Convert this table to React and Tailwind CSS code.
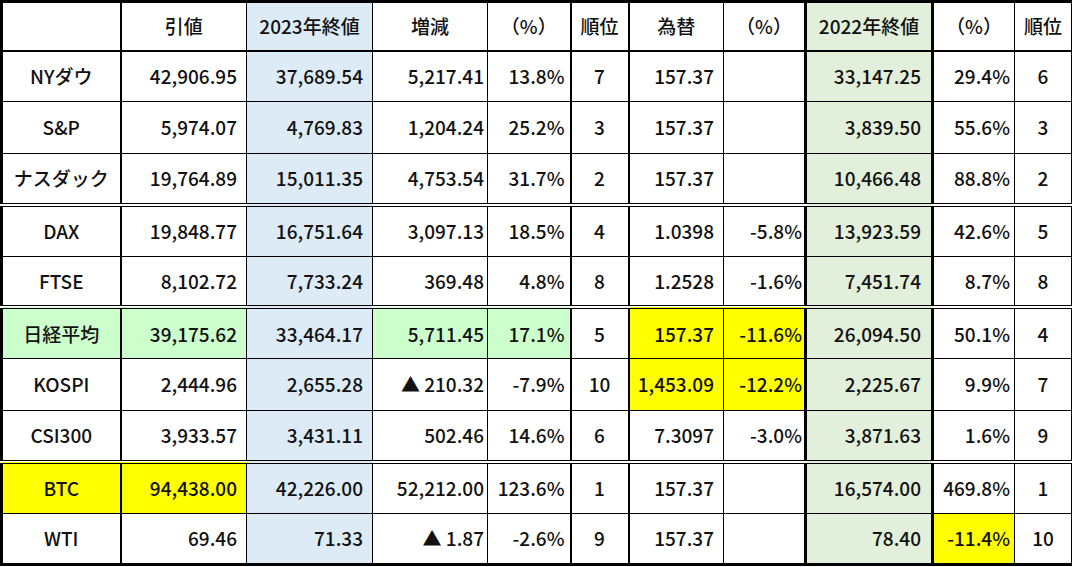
import React from 'react';

const headers = ['', '引値', '2023年終値', '増減', '（%）', '順位', '為替', '（%）', '2022年終値', '（%）', '順位'];

// 背景: g = 日経の緑, y = 黄色
const rows = [
  { d: ['NYダウ', '42,906.95', '37,689.54', '5,217.41', '13.8%', '7', '157.37', '', '33,147.25', '29.4%', '6'] },
  { d: ['S&P', '5,974.07', '4,769.83', '1,204.24', '25.2%', '3', '157.37', '', '3,839.50', '55.6%', '3'] },
  { d: ['ナスダック', '19,764.89', '15,011.35', '4,753.54', '31.7%', '2', '157.37', '', '10,466.48', '88.8%', '2'], dbl: true },
  { d: ['DAX', '19,848.77', '16,751.64', '3,097.13', '18.5%', '4', '1.0398', '-5.8%', '13,923.59', '42.6%', '5'] },
  { d: ['FTSE', '8,102.72', '7,733.24', '369.48', '4.8%', '8', '1.2528', '-1.6%', '7,451.74', '8.7%', '8'], dbl: true },
  { d: ['日経平均', '39,175.62', '33,464.17', '5,711.45', '17.1%', '5', '157.37', '-11.6%', '26,094.50', '50.1%', '4'], bg: { 0: 'g', 1: 'g', 3: 'g', 4: 'g', 6: 'y', 7: 'y' } },
  { d: ['KOSPI', '2,444.96', '2,655.28', '▲ 210.32', '-7.9%', '10', '1,453.09', '-12.2%', '2,225.67', '9.9%', '7'], bg: { 6: 'y', 7: 'y' } },
  { d: ['CSI300', '3,933.57', '3,431.11', '502.46', '14.6%', '6', '7.3097', '-3.0%', '3,871.63', '1.6%', '9'], dbl: true },
  { d: ['BTC', '94,438.00', '42,226.00', '52,212.00', '123.6%', '1', '157.37', '', '16,574.00', '469.8%', '1'], bg: { 0: 'y', 1: 'y' } },
  { d: ['WTI', '69.46', '71.33', '▲ 1.87', '-2.6%', '9', '157.37', '', '78.40', '-11.4%', '10'], bg: { 9: 'y' } },
];

const widths = ['w-[119px]', 'w-[126px]', 'w-[126px]', 'w-[115px]', 'w-[83px]', 'w-[58px]', 'w-[95px]', 'w-[82px]', 'w-[127px]', 'w-[82px]', 'w-[57px]'];

const rightBorder = ['border-r-2', 'border-r', 'border-r', 'border-r', 'border-r-2', 'border-r-2', 'border-r', 'border-r-[3px]', 'border-r-[3px]', 'border-r', 'border-r'];

// 数値セルの配置と右余白
const align = ['text-center', 'text-right pr-[9px]', 'text-right pr-[9px]', 'text-right pr-[3px]', 'text-right pr-[5px]', 'text-center', 'text-right pr-[9px]', 'text-right pr-[2px]', 'text-right pr-[10px]', 'text-right pr-[4px]', 'text-center'];

const colBg = ['', '', 'bg-[#ddebf7]', '', '', '', '', '', 'bg-[#e2efda]', '', ''];

const fill = { g: 'bg-[#ccffcc]', y: 'bg-[#ffff00]' };

export default function App() {
  return (
    <div className="w-[1075px] h-[567px] bg-white font-['Noto_Sans_CJK_JP',sans-serif] text-[19px] font-medium text-[#111]">
      <table className="table-fixed border-collapse">
        <colgroup>
          {widths.map((w, i) => <col key={i} className={w} />)}
        </colgroup>
        <thead>
          <tr className="h-[49px]">
            {headers.map((h, i) => (
              <th
                key={i}
                className={`font-medium text-center border-black border-t-[3px] border-b-2 ${rightBorder[i]} ${i === 0 ? 'border-l-[3px]' : ''} ${colBg[i]}`}
              >
                {h}
              </th>
            ))}
          </tr>
        </thead>
        <tbody>
          {rows.map((r, ri) => {
            const last = ri === rows.length - 1;
            const bottom = last ? 'border-b-[3px]' : r.dbl ? 'border-b-4 [border-bottom-style:double]' : 'border-b';
            return (
              <tr key={ri} className="h-[51.4px]">
                {r.d.map((v, ci) => {
                  const bg = r.bg && r.bg[ci] ? fill[r.bg[ci]] : colBg[ci];
                  return (
                    <td
                      key={ci}
                      className={`border-black whitespace-nowrap ${bottom} ${rightBorder[ci]} ${ci === 0 ? 'border-l-[3px]' : ''} ${align[ci]} ${bg}`}
                    >
                      {v}
                    </td>
                  );
                })}
              </tr>
            );
          })}
        </tbody>
      </table>
    </div>
  );
}
